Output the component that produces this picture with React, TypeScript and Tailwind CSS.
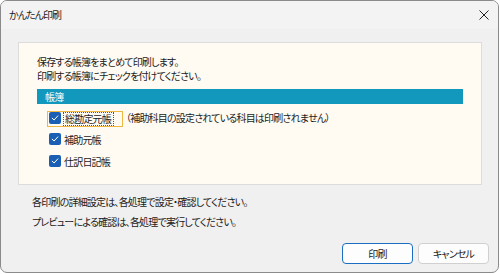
import React from "react";

function Check() {
  return (
    <span className="flex h-[12px] w-[12px] shrink-0 items-center justify-center rounded-[2px] bg-[#1a5fb4]">
      <svg width="8" height="8" viewBox="0 0 8 8" fill="none">
        <path d="M1.2 4.2 L3.1 6 L6.8 1.9" stroke="white" strokeWidth="1" strokeLinecap="round" strokeLinejoin="round" />
      </svg>
    </span>
  );
}

export default function App() {
  return (
    <div className="h-[274px] w-[500px] bg-white font-['Noto_Sans_CJK_JP',sans-serif] [font-feature-settings:'palt'] text-[10px] tracking-[-0.8px] text-[#1a1a1a]">
      <div className="flex h-[273px] w-[499px] flex-col overflow-hidden rounded-[7px] border border-[#8a8a8a] bg-[#f0f0f0]">
        <div className="flex h-[28px] items-center justify-between bg-[#f3f3f3] pl-[8px] pr-[9px]">
          <span className="leading-none tracking-[-1px]">かんたん印刷</span>
          <svg width="10" height="10" viewBox="0 0 10 10">
            <path d="M0.5 0.5 L9.5 9.5 M9.5 0.5 L0.5 9.5" stroke="#222" strokeWidth="1" />
          </svg>
        </div>
        <div className="ml-[17px] mr-[16px] mt-[13px] h-[143px] border border-[#dcdcdc] bg-[#fffaf2] pl-[18px] pr-[18px] pt-[12px]">
          <div className="leading-[14px]">保存する帳簿をまとめて印刷します。</div>
          <div className="leading-[14px]">印刷する帳簿にチェックを付けてください。</div>
          <div className="mt-[6px] flex h-[15px] items-center bg-[#1298bd] pl-[8px] text-white">帳簿</div>
          <div className="ml-[10px] mt-[7px] flex items-start">
            <div className="flex h-[16px] items-start gap-[2px] border border-[#f0b840] pl-[1px] pr-[8px]">
              <Check />
              <span className="border border-dotted border-[#555] pl-[1px] pr-[2px] leading-[12px]">総勘定元帳</span>
            </div>
            <span className="ml-[3px] leading-[13px]">（補助科目の設定されている科目は印刷されません）</span>
          </div>
          <div className="ml-[12px] mt-[3px] flex h-[18px] items-center gap-[3px]">
            <Check />
            <span>補助元帳</span>
          </div>
          <div className="ml-[12px] mt-[4px] flex h-[18px] items-center gap-[3px]">
            <Check />
            <span>仕訳日記帳</span>
          </div>
        </div>
        <div className="ml-[31px] mt-[10px] leading-[13px]">各印刷の詳細設定は、各処理で設定・確認してください。</div>
        <div className="ml-[31px] mt-[7px] leading-[13px]">プレビューによる確認は、各処理で実行してください。</div>
        <div className="mt-[15px] flex justify-end gap-[5px] pr-[9px]">
          <button className="flex h-[21px] w-[71px] items-center justify-center rounded-[4px] border border-[#1a6fc4] bg-[#fdfdfd]">印刷</button>
          <button className="flex h-[21px] w-[71px] items-center justify-center rounded-[4px] border border-[#d0d0d0] bg-[#fdfdfd]">キャンセル</button>
        </div>
      </div>
    </div>
  );
}
